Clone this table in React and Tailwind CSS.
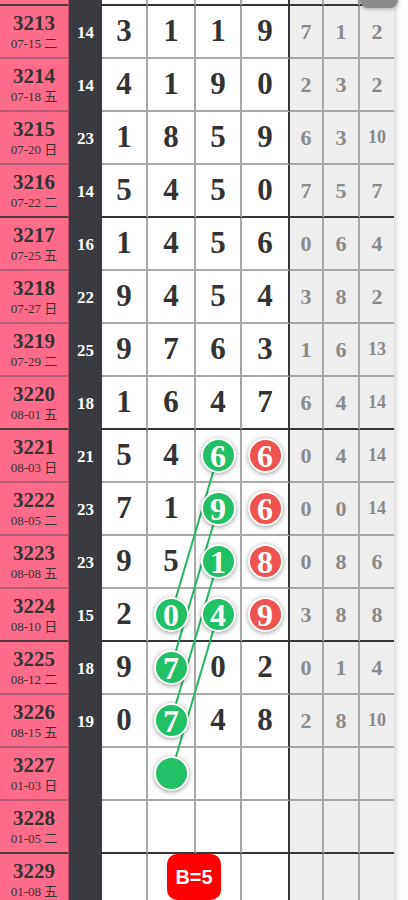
import React from "react";
import clsx from "clsx";

// g = green ball, r = red ball
const rows = [
  { id: "", date: "", sum: "", main: ["", "", "", ""], side: ["", "", ""] },
  { id: "3213", date: "07-15 二", sum: 14, main: [3, 1, 1, 9], side: [7, 1, 2] },
  { id: "3214", date: "07-18 五", sum: 14, main: [4, 1, 9, 0], side: [2, 3, 2] },
  { id: "3215", date: "07-20 日", sum: 23, main: [1, 8, 5, 9], side: [6, 3, 10] },
  { id: "3216", date: "07-22 二", sum: 14, main: [5, 4, 5, 0], side: [7, 5, 7] },
  { id: "3217", date: "07-25 五", sum: 16, main: [1, 4, 5, 6], side: [0, 6, 4] },
  { id: "3218", date: "07-27 日", sum: 22, main: [9, 4, 5, 4], side: [3, 8, 2] },
  { id: "3219", date: "07-29 二", sum: 25, main: [9, 7, 6, 3], side: [1, 6, 13] },
  { id: "3220", date: "08-01 五", sum: 18, main: [1, 6, 4, 7], side: [6, 4, 14] },
  { id: "3221", date: "08-03 日", sum: 21, main: [5, 4, { g: 6 }, { r: 6 }], side: [0, 4, 14] },
  { id: "3222", date: "08-05 二", sum: 23, main: [7, 1, { g: 9 }, { r: 6 }], side: [0, 0, 14] },
  { id: "3223", date: "08-08 五", sum: 23, main: [9, 5, { g: 1 }, { r: 8 }], side: [0, 8, 6] },
  { id: "3224", date: "08-10 日", sum: 15, main: [2, { g: 0 }, { g: 4 }, { r: 9 }], side: [3, 8, 8] },
  { id: "3225", date: "08-12 二", sum: 18, main: [9, { g: 7 }, 0, 2], side: [0, 1, 4] },
  { id: "3226", date: "08-15 五", sum: 19, main: [0, { g: 7 }, 4, 8], side: [2, 8, 10] },
  { id: "3227", date: "01-03 日", sum: "", main: ["", { g: "" }, "", ""], side: ["", "", ""] },
  { id: "3228", date: "01-05 二", sum: "", main: ["", "", "", ""], side: ["", "", ""] },
  { id: "3229", date: "01-08 五", sum: "", main: ["", "", "", ""], side: ["", "", ""], badge: "B=5" },
];

const ROW_H = 53;
const colX = [125, 171, 218, 265];

// trend lines: [fromRow, fromCol, toRow, toCol]
const links = [
  [9, 2, 12, 1],
  [10, 2, 13, 1],
  [11, 2, 14, 1],
  [12, 2, 15, 1],
];

const mainW = ["w-[46px]", "w-[48px]", "w-[46px]", "w-[48px]"];
const sideW = ["w-[34px]", "w-[36px]", "w-[34px]"];

function Ball({ color, value }) {
  return (
    <div
      className={clsx(
        "relative z-20 flex h-[35px] w-[35px] items-center justify-center rounded-full border-2 border-white text-[32px] font-bold leading-none text-white shadow-[0_1px_5px_rgba(0,0,0,0.4)]",
        color === "g" ? "bg-[#22c066]" : "bg-[#ef5350]"
      )}
    >
      {value}
    </div>
  );
}

function Row({ row, idx }) {
  const thick = idx % 4 === 0;
  const bottom = thick ? "border-b-[#36363c]" : "border-b-[#a8a8a8]";

  return (
    <div className="relative flex h-[53px]">
      <div
        className={clsx(
          "flex w-[69px] flex-col items-center justify-center border-r border-b-2 border-r-[#c24f6e] bg-[#ff6b8b] text-[#333]",
          thick ? "border-b-[#4a3a40]" : "border-b-[#b85a78]"
        )}
      >
        <div className="text-[21px] font-bold leading-[22px]">{row.id}</div>
        <div className="mt-[3px] text-[13px] leading-[14px]">{row.date}</div>
      </div>
      <div className="flex w-[33px] items-center justify-center bg-[#3a3a41] text-[17px] font-bold text-white">
        {row.sum}
      </div>
      {row.main.map((v, i) => (
        <div
          key={i}
          className={clsx(
            "flex items-center justify-center border-r-2 border-b-2 bg-white text-[31px] font-bold text-[#333]",
            mainW[i],
            bottom,
            i === 3 ? "border-r-[#36363c]" : "border-r-[#a8a8a8]"
          )}
        >
          {typeof v === "object" ? (
            <Ball color={v.g !== undefined ? "g" : "r"} value={v.g !== undefined ? v.g : v.r} />
          ) : (
            v
          )}
        </div>
      ))}
      {row.side.map((v, i) => (
        <div
          key={i}
          className={clsx(
            "flex items-center justify-center border-b-2 bg-[#eeeeee] font-bold text-[#8a8a8a]",
            sideW[i],
            bottom,
            i < 2 && "border-r-2 border-r-[#a8a8a8]",
            String(v).length > 1 ? "text-[18px]" : "text-[22px]"
          )}
        >
          {v}
        </div>
      ))}
      {row.badge && (
        <div className="absolute top-0 left-[167px] z-20 flex h-[46px] w-[54px] items-center justify-center rounded-[10px] bg-[#ff0000] font-['Liberation_Sans',Arial,sans-serif] text-[20px] font-bold text-white">
          {row.badge}
        </div>
      )}
    </div>
  );
}

export default function App() {
  return (
    <div className="relative h-[900px] overflow-hidden bg-white font-['Liberation_Serif','Noto_Sans_CJK_SC',serif]">
      <div className="relative -mt-[47px] w-[394px] shadow-[2px_0_6px_rgba(0,0,0,0.18)]">
        {rows.map((row, idx) => (
          <Row key={idx} row={row} idx={idx} />
        ))}
        <svg
          className="pointer-events-none absolute top-0 left-0 z-10"
          width="394"
          height={rows.length * ROW_H}
        >
          {links.map(([r1, c1, r2, c2], i) => (
            <line
              key={i}
              x1={colX[c1]}
              y1={r1 * ROW_H + 25.5}
              x2={colX[c2]}
              y2={r2 * ROW_H + 25.5}
              stroke="#22b862"
              strokeWidth="2"
            />
          ))}
        </svg>
      </div>
      <div className="absolute -top-[22px] right-[10px] h-[30px] w-[38px] rounded-[8px] bg-[#8a8a8a] shadow-[0_1px_4px_rgba(0,0,0,0.3)]" />
    </div>
  );
}
